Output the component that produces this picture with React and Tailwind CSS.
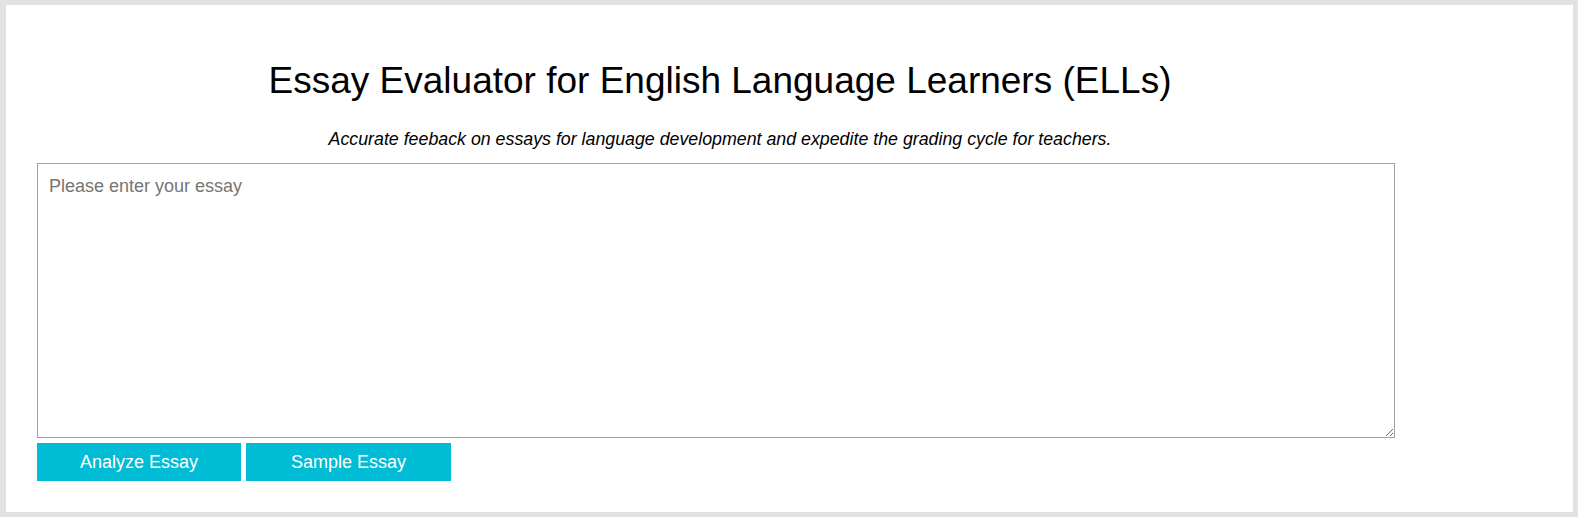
import React from 'react';

const App = () => {
    return (
        <div className="h-[517px] w-full bg-[#e2e2e2] pt-[5px] pl-[6px] pr-[5px] pb-[5px]" style={{ fontFamily: '"Liberation Sans", Arial, sans-serif' }}>
            <div className="h-full w-full bg-white pl-[31px] pt-[55px]">
                <div className="w-[1358px] flex flex-col">
                    <h1 className="text-center text-[37px] leading-[42px] text-black pl-[8px]">
                        Essay Evaluator for English Language Learners (ELLs)
                    </h1>
                    <p className="text-center italic text-[17.8px] leading-[22px] text-black mt-[26px] pl-[8px]">
                        Accurate feeback on essays for language development and expedite the grading cycle for teachers.
                    </p>
                    <textarea
                        className="mt-[13px] h-[275px] w-full border border-[#a0a0a0] px-[11px] py-[9px] text-[18px] text-black placeholder:text-[#757575] outline-none"
                        placeholder="Please enter your essay"
                    />
                    <div className="flex gap-[5px] mt-[5px]">
                        <button className="w-[204px] h-[38px] bg-[#00bcd4] text-white text-[18px]">Analyze Essay</button>
                        <button className="w-[205px] h-[38px] bg-[#00bcd4] text-white text-[18px]">Sample Essay</button>
                    </div>
                </div>
            </div>
        </div>
    )
}

export default App
